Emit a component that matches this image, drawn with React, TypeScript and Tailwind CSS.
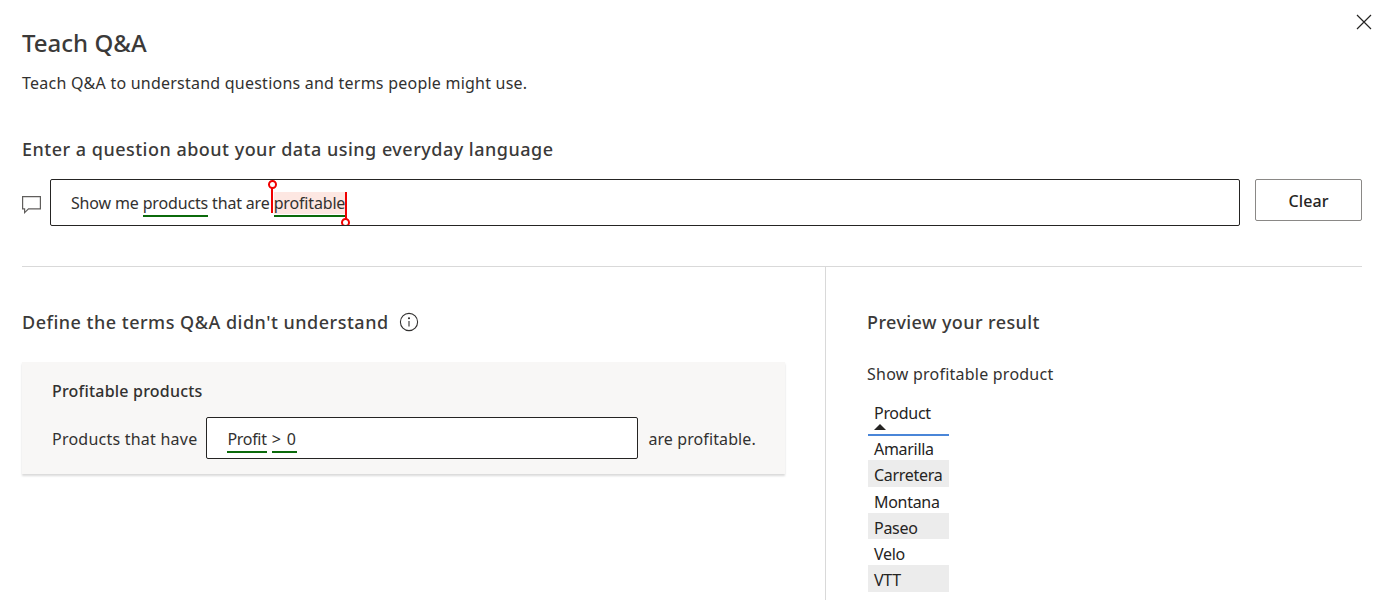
const font = "font-['Noto_Sans','Open_Sans',sans-serif]"

const rows = ['Amarilla', 'Carretera', 'Montana', 'Paseo', 'Velo', 'VTT']

function Underlined({ children }: { children: React.ReactNode }) {
  return <span className="border-b-2 border-[#0b6a0b] pb-[1px]">{children}</span>
}

export default function App() {
  return (
    <div className={`${font} relative h-[600px] w-[1381px] overflow-hidden bg-white pl-[22px] pr-[19px] text-[#323130]`}>
      {/* Close */}
      <button className="absolute right-[9px] top-[14px]">
        <svg width="16" height="16" viewBox="0 0 16 16" fill="none" stroke="#252423" strokeWidth="1.2">
          <path d="M1 1l14 14M15 1L1 15" />
        </svg>
      </button>

      {/* Header */}
      <h1 className="pt-[26px] text-[24px] font-medium leading-[34px] text-[#3b3a39]">Teach Q&amp;A</h1>
      <p className="mt-[11px] text-[16px] leading-[24px] tracking-[0.23px]">
        Teach Q&amp;A to understand questions and terms people might use.
      </p>
      <h2 className="mt-[41px] text-[18px] font-medium leading-[26px] tracking-[0.49px] text-[#3b3a39]">
        Enter a question about your data using everyday language
      </h2>

      {/* Question input */}
      <div className="mt-[17px] flex items-start">
        <svg className="mt-[17px] shrink-0" width="19" height="18" viewBox="0 0 19 18" fill="none" strokeWidth="1.2">
          <path d="M.6.6h17.8v12.2H6.5L2.6 16.6v-3.8H.6z" stroke="#605e5c" />
        </svg>
        <div className="ml-[9px] flex h-[47px] w-[1190px] items-center overflow-hidden rounded-[2px] border border-[#252423] pl-[20px] text-[16px] tracking-[-0.16px]">
          <span className="relative whitespace-pre">
            Show me <Underlined>products</Underlined> that are{' '}
            <span className="relative bg-[#fde7e2]">
              <Underlined>profitable</Underlined>
              <span className="absolute -left-[3px] -top-[8px] h-[29px] w-[2.5px] bg-[#f00000]" />
              <span className="absolute -left-[6px] -top-[12px] h-[9px] w-[9px] rounded-full border-2 border-[#f00000] bg-white" />
              <span className="absolute -right-[2px] top-0 h-[30px] w-[2.5px] bg-[#f00000]" />
              <span className="absolute -bottom-[13px] -right-[5px] h-[9px] w-[9px] rounded-full border-2 border-[#f00000] bg-white" />
            </span>
          </span>
        </div>
        <button className="ml-[15px] h-[42px] w-[107px] rounded-[2px] border border-[#8a8886] pt-[2px] text-[16px] font-medium tracking-[0.1px] text-[#252423]">
          Clear
        </button>
      </div>

      <div className="mt-[40px] border-t border-[#d9d9d9]" />

      {/* Bottom */}
      <div className="flex h-[334px]">
        <div className="w-[804px] shrink-0 border-r border-[#d9d9d9] pt-[42px]">
          <div className="flex items-center gap-[10px]">
            <h2 className="text-[18px] font-medium leading-[26px] tracking-[0.5px] text-[#3b3a39]">
              Define the terms Q&amp;A didn&apos;t understand
            </h2>
            <svg width="20" height="20" viewBox="0 0 20 20" fill="none" stroke="#323130" strokeWidth="1.1">
              <circle cx="10" cy="10" r="8.6" />
              <path d="M10 9v5.5" />
              <circle cx="10" cy="6.3" r=".5" fill="#323130" />
            </svg>
          </div>
          <div className="mt-[27px] h-[112px] w-[763px] bg-[#f8f7f6] pl-[30px] pt-[17px] shadow-[0_2px_2px_rgba(0,0,0,0.15)]">
            <h3 className="text-[16px] font-medium leading-[24px] tracking-[0.2px]">Profitable products</h3>
            <div className="mt-[14px] flex items-center text-[16px] tracking-[0.23px]">
              <span className="pt-[2px]">Products that have</span>
              <div className="ml-[9px] flex h-[42px] w-[432px] items-center rounded-[2px] border border-[#252423] bg-white pl-[20px] pt-[4px] tracking-[-0.3px]">
                <span className="border-b-2 border-[#0b6a0b]">Profit</span>
                <span className="ml-[5px] border-b-2 border-[#0b6a0b] tracking-[0.9px]">&gt; 0</span>
              </div>
              <span className="ml-[10px] pt-[2px] tracking-[0.1px]">are profitable.</span>
            </div>
          </div>
        </div>

        <div className="pl-[41px] pt-[42px]">
          <h2 className="text-[18px] font-medium leading-[26px] tracking-[0.4px] text-[#3b3a39]">Preview your result</h2>
          <p className="mt-[27px] text-[16px] leading-[24px] tracking-[0.23px]">Show profitable product</p>
          <div className="ml-px mt-[14px] w-[81px] text-[16px] leading-[26px] tracking-[-0.3px] text-[#252423]">
            <div className="h-[36px] border-b-2 border-[#4a86d8] pl-[6px]">
              <div className="h-[24px] pt-[2px] leading-[22px]">Product</div>
              <svg width="12" height="6" viewBox="0 0 12 6" fill="#252423"><path d="M0 6L6 0l6 6z" /></svg>
            </div>
            {rows.map((r, i) => (
              <div
                key={r}
                className={`pl-[6px] ${i === 0 ? 'h-[24.25px]' : 'h-[26.25px] pt-[2px]'} ${i % 2 ? 'bg-[#ececec]' : 'bg-white'}`}
              >
                {r}
              </div>
            ))}
          </div>
        </div>
      </div>
    </div>
  )
}
